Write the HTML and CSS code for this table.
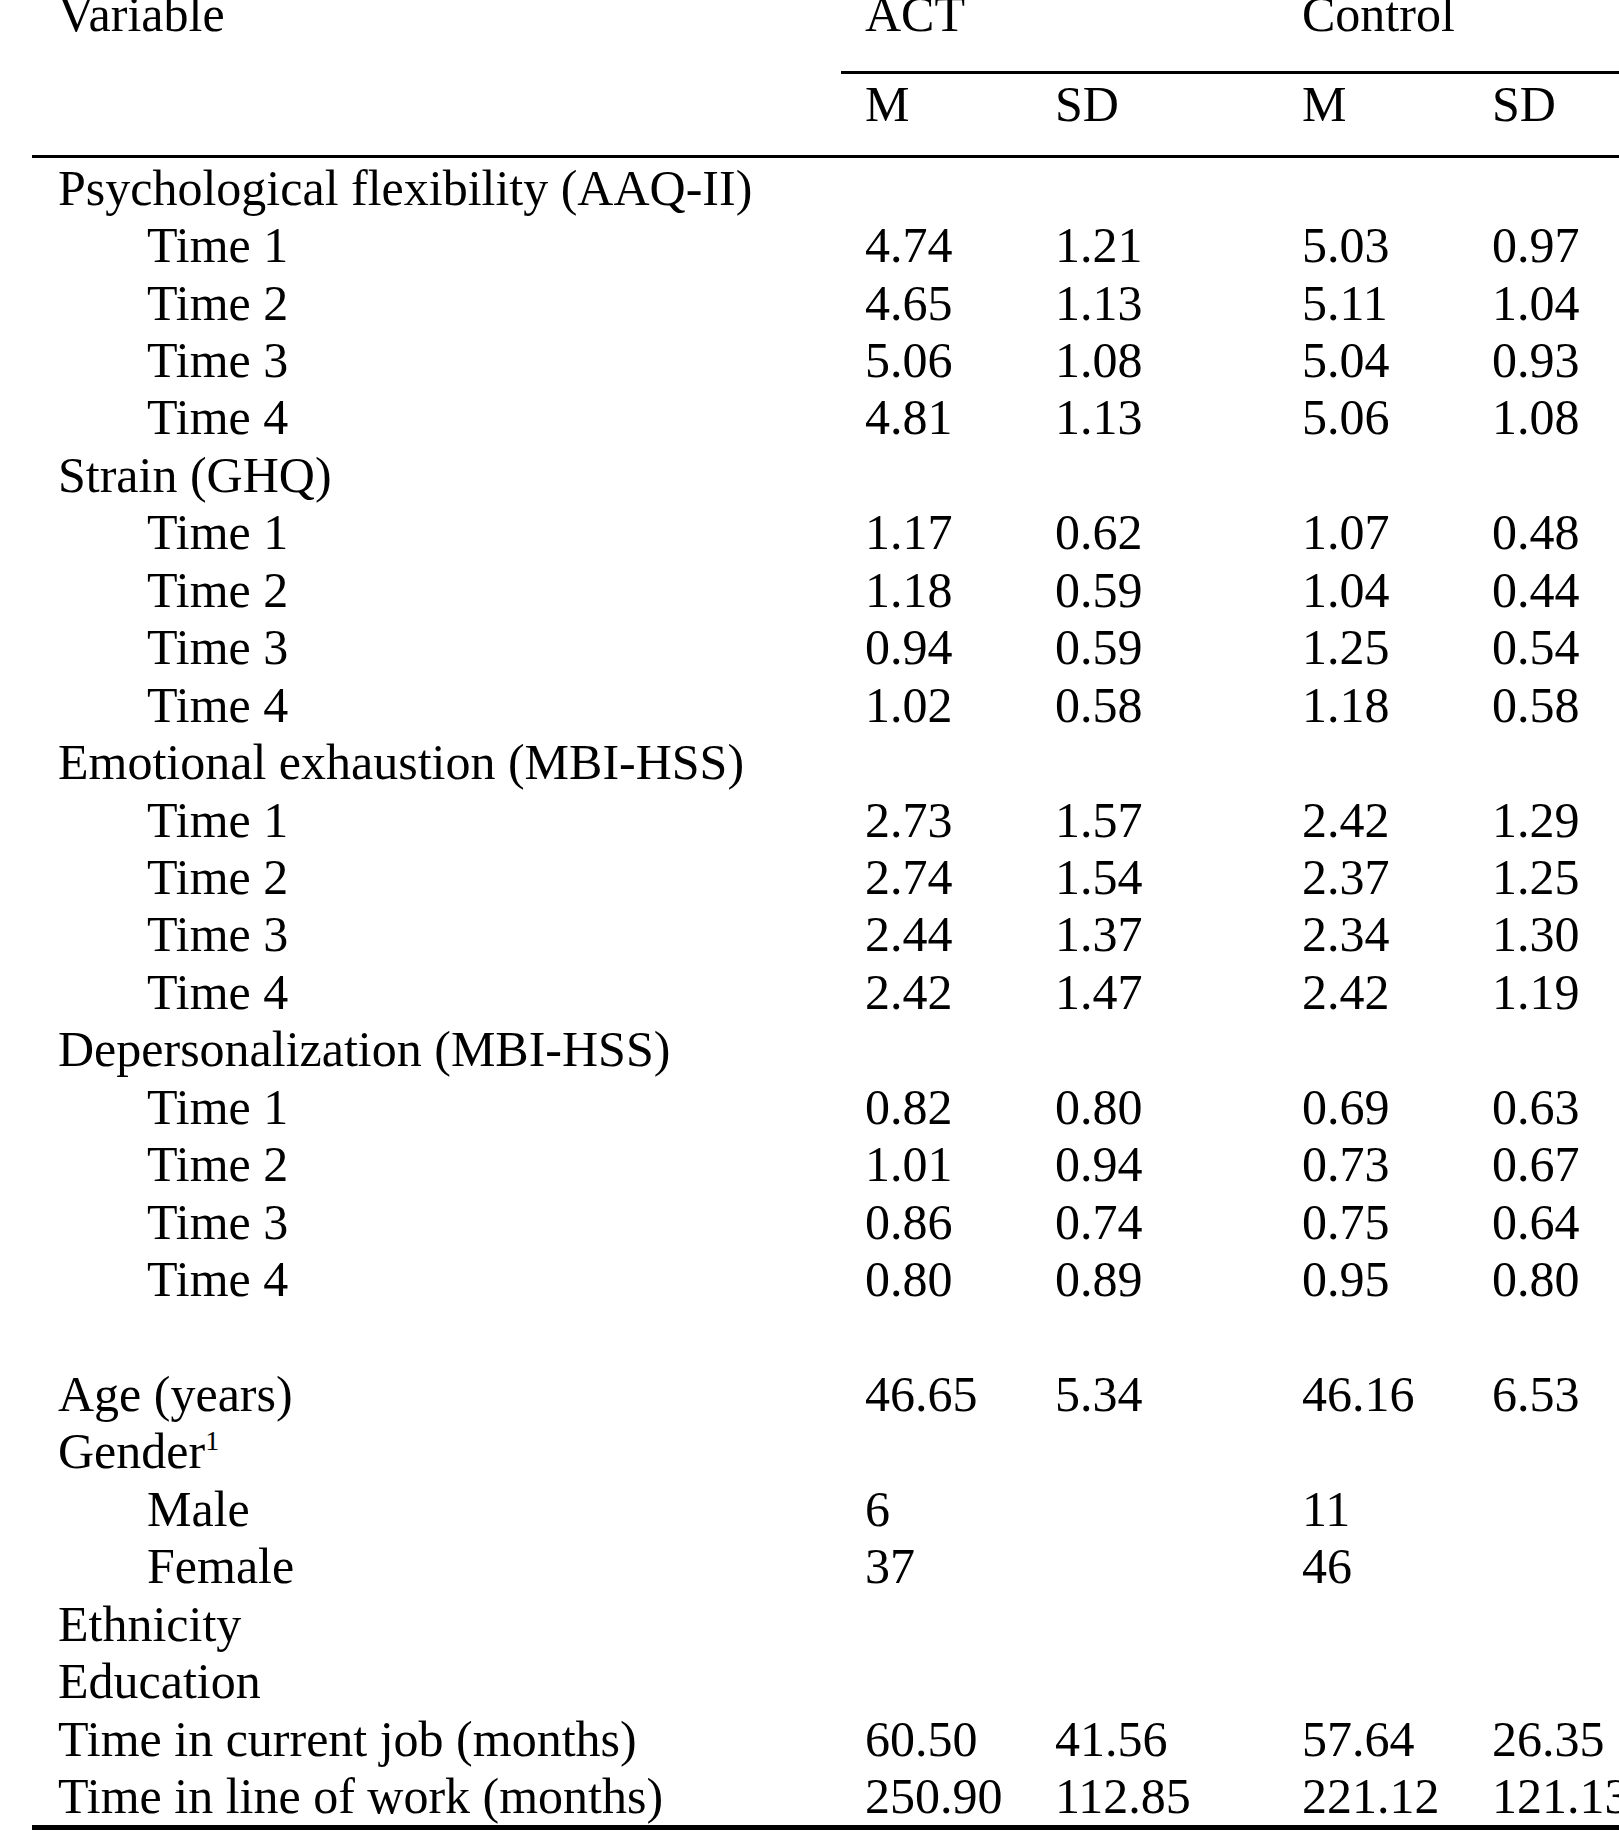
FILE: index.html
```html
<!DOCTYPE html>
<html lang="en">
<head>
<meta charset="utf-8">
<title>Descriptive statistics</title>
<link rel="stylesheet" href="styles.css">
</head>
<body>
<div class="table">
  <div class="thead">
    <div class="h-var">Variable</div>
    <div class="h-group g-act">ACT</div>
    <div class="h-group g-ctl">Control</div>
    <div class="h-sub c2">M</div>
    <div class="h-sub c3">SD</div>
    <div class="h-sub c4">M</div>
    <div class="h-sub c5">SD</div>
  </div>
  <div class="tbody">
    <div class="row"><div class="lab">Psychological flexibility (AAQ-II)</div><div></div><div></div><div></div><div></div></div>
    <div class="row"><div class="lab sub">Time 1</div><div>4.74</div><div>1.21</div><div>5.03</div><div>0.97</div></div>
    <div class="row"><div class="lab sub">Time 2</div><div>4.65</div><div>1.13</div><div>5.11</div><div>1.04</div></div>
    <div class="row"><div class="lab sub">Time 3</div><div>5.06</div><div>1.08</div><div>5.04</div><div>0.93</div></div>
    <div class="row"><div class="lab sub">Time 4</div><div>4.81</div><div>1.13</div><div>5.06</div><div>1.08</div></div>
    <div class="row"><div class="lab">Strain (GHQ)</div><div></div><div></div><div></div><div></div></div>
    <div class="row"><div class="lab sub">Time 1</div><div>1.17</div><div>0.62</div><div>1.07</div><div>0.48</div></div>
    <div class="row"><div class="lab sub">Time 2</div><div>1.18</div><div>0.59</div><div>1.04</div><div>0.44</div></div>
    <div class="row"><div class="lab sub">Time 3</div><div>0.94</div><div>0.59</div><div>1.25</div><div>0.54</div></div>
    <div class="row"><div class="lab sub">Time 4</div><div>1.02</div><div>0.58</div><div>1.18</div><div>0.58</div></div>
    <div class="row"><div class="lab">Emotional exhaustion (MBI-HSS)</div><div></div><div></div><div></div><div></div></div>
    <div class="row"><div class="lab sub">Time 1</div><div>2.73</div><div>1.57</div><div>2.42</div><div>1.29</div></div>
    <div class="row"><div class="lab sub">Time 2</div><div>2.74</div><div>1.54</div><div>2.37</div><div>1.25</div></div>
    <div class="row"><div class="lab sub">Time 3</div><div>2.44</div><div>1.37</div><div>2.34</div><div>1.30</div></div>
    <div class="row"><div class="lab sub">Time 4</div><div>2.42</div><div>1.47</div><div>2.42</div><div>1.19</div></div>
    <div class="row"><div class="lab">Depersonalization (MBI-HSS)</div><div></div><div></div><div></div><div></div></div>
    <div class="row"><div class="lab sub">Time 1</div><div>0.82</div><div>0.80</div><div>0.69</div><div>0.63</div></div>
    <div class="row"><div class="lab sub">Time 2</div><div>1.01</div><div>0.94</div><div>0.73</div><div>0.67</div></div>
    <div class="row"><div class="lab sub">Time 3</div><div>0.86</div><div>0.74</div><div>0.75</div><div>0.64</div></div>
    <div class="row"><div class="lab sub">Time 4</div><div>0.80</div><div>0.89</div><div>0.95</div><div>0.80</div></div>
    <div class="row"><div class="lab"></div><div></div><div></div><div></div><div></div></div>
    <div class="row"><div class="lab">Age (years)</div><div>46.65</div><div>5.34</div><div>46.16</div><div>6.53</div></div>
    <div class="row"><div class="lab">Gender<sup>1</sup></div><div></div><div></div><div></div><div></div></div>
    <div class="row"><div class="lab sub">Male</div><div>6</div><div></div><div>11</div><div></div></div>
    <div class="row"><div class="lab sub">Female</div><div>37</div><div></div><div>46</div><div></div></div>
    <div class="row"><div class="lab">Ethnicity</div><div></div><div></div><div></div><div></div></div>
    <div class="row"><div class="lab">Education</div><div></div><div></div><div></div><div></div></div>
    <div class="row"><div class="lab">Time in current job (months)</div><div>60.50</div><div>41.56</div><div>57.64</div><div>26.35</div></div>
    <div class="row last"><div class="lab">Time in line of work (months)</div><div>250.90</div><div>112.85</div><div>221.12</div><div>121.13</div></div>
  </div>
</div>
</body>
</html>
```
FILE: styles.css
```css
html, body {
  margin: 0;
  padding: 0;
  background: #fff;
  overflow: hidden;
}

.table {
  margin-top: -10px;
  margin-left: 32px;
  width: 1720px;
  font-family: "Liberation Serif", "Times New Roman", serif;
  font-size: 50px;
  line-height: 57.45px;
  color: #000;
}

.thead {
  display: grid;
  grid-template-columns: 809px 190px 247px 190px 284px;
  grid-template-rows: 83.6px 81.1px;
  border-bottom: 3px solid #000;
}

.thead > div {
  padding-top: 2px;
  white-space: nowrap;
}

.thead > .h-var,
.thead > .h-group {
  padding-top: 0;
  margin-top: -3.6px;
}

.h-var {
  grid-column: 1;
  grid-row: 1;
  padding-left: 26px;
}

.h-group {
  grid-row: 1;
  padding-left: 24px;
  border-bottom: 3px solid #000;
}

.g-act { grid-column: 2 / 4; }
.g-ctl { grid-column: 4 / 6; }

.h-sub {
  grid-row: 2;
  padding-left: 24px;
}

.c2 { grid-column: 2; }
.c3 { grid-column: 3; }
.c4 { grid-column: 4; }
.c5 { grid-column: 5; }

.row {
  display: grid;
  grid-template-columns: 809px 190px 247px 190px 284px;
  grid-template-rows: 57.45px;
  height: 57.45px;
}

.row > div {
  padding-left: 24px;
  padding-top: 2px;
  white-space: nowrap;
}

.row > .lab { padding-left: 26px; }
.row > .lab.sub { padding-left: 115px; }

.row.last {
  border-bottom: 5px solid #000;
  height: 59.5px;
}

sup {
  font-size: 28px;
  line-height: 0;
  vertical-align: 18px;
}
```
